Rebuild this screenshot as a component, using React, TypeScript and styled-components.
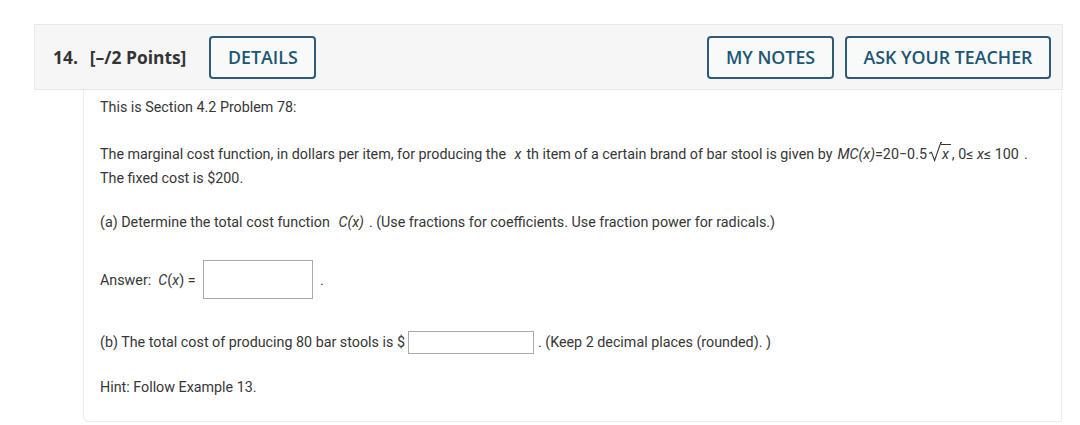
import React from 'react';
import styled, { createGlobalStyle } from 'styled-components';

const GlobalStyle = createGlobalStyle`
  html, body {
    margin: 0;
    padding: 0;
    background: #ffffff;
  }
  * {
    box-sizing: border-box;
  }
`;

const Page = styled.div`
  padding: 24px 0 0 34px;
  width: 1063px;
`;

const Header = styled.div`
  height: 66px;
  display: flex;
  align-items: center;
  padding: 0 11px 0 18px;
  background: #f6f6f6;
  border: 1px solid #e8e8e8;
`;

const Title = styled.div`
  font-family: 'Open Sans', 'Liberation Sans', sans-serif;
  font-weight: 700;
  font-size: 17.4px;
  color: #343434;
  white-space: pre;
  margin-right: 23px;
`;

const Gap = styled.span`
  display: inline-block;
  width: 12px;
`;

const Spacer = styled.div`
  flex: 1;
`;

const HeaderButton = styled.button<{ $width: number }>`
  width: ${({ $width }) => $width}px;
  height: 43px;
  border: 2px solid #2c5c76;
  border-radius: 4px;
  background: #f8f9f9;
  color: #1d5674;
  font-family: 'Open Sans', 'Liberation Sans', sans-serif;
  font-weight: 600;
  font-size: 17.8px;
  padding: 0;
  margin-left: 11px;
  cursor: pointer;

  &:first-of-type {
    margin-left: 0;
  }
`;

const Body = styled.div`
  margin-left: 49px;
  width: 979px;
  height: 332px;
  padding: 5px 16px 0;
  border-left: 1px solid #ececec;
  border-right: 1px solid #ececec;
  border-bottom: 1px solid #ececec;
  border-bottom-left-radius: 6px;
  font-family: Roboto, 'Liberation Sans', sans-serif;
  font-size: 14.3px;
  line-height: 24px;
  color: #363636;
`;

const Para = styled.p<{ $top: number }>`
  margin: ${({ $top }) => $top}px 0 0;
`;

const Math = styled.span`
  font-style: italic;
  padding: 0 5px;
`;

const Up = styled.span`
  font-style: normal;
`;

const Var = styled.i`
  font-style: italic;
`;

const Sqrt = styled.span`
  display: inline-flex;
  align-items: flex-end;
  vertical-align: -3px;
  margin: 0 1px;
`;

const Radicand = styled.span`
  font-style: italic;
  border-top: 1px solid #363636;
  line-height: 16px;
  padding: 1px 2px 0 1px;
  margin-left: -1px;
`;

const Row = styled.div<{ $top: number }>`
  display: flex;
  align-items: center;
  margin-top: ${({ $top }) => $top}px;
`;

const AnswerBox = styled.input<{ $w: number; $h: number; $gap: number }>`
  width: ${({ $w }) => $w}px;
  height: ${({ $h }) => $h}px;
  border: 1px solid #a9a9a9;
  background: #ffffff;
  margin: 0 4px 0 ${({ $gap }) => $gap}px;
  padding: 0 4px;
  font-family: Roboto, 'Liberation Sans', sans-serif;
  font-size: 14px;
`;

const RadicalSign: React.FC = () => (
  <svg width="14" height="20" viewBox="0 0 14 20" aria-hidden="true">
    <path d="M1 11.5 L3.5 10.2 L6.6 18.5 L12.8 0.6 L14 0.6" fill="none" stroke="#363636" strokeWidth="1.1" />
  </svg>
);

const App: React.FC = () => {
  return (
    <>
      <GlobalStyle />
      <Page>
        <Header>
          <Title>
            14.<Gap />[–/2 Points]
          </Title>
          <HeaderButton $width={107}>DETAILS</HeaderButton>
          <Spacer />
          <HeaderButton $width={127}>MY NOTES</HeaderButton>
          <HeaderButton $width={206}>ASK YOUR TEACHER</HeaderButton>
        </Header>
        <Body>
          <Para $top={0}>This is Section 4.2 Problem 78:</Para>
          <Para $top={23}>
            The marginal cost function, in dollars per item, for producing the <Math>x</Math>th item of a
            certain brand of bar stool is given by
            <Math>
              MC(x)<Up>=20−0.5</Up>
              <Sqrt>
                <RadicalSign />
                <Radicand>x</Radicand>
              </Sqrt>
              <Up>, 0≤ </Up>x<Up>≤ 100</Up>
            </Math>
            .
            <br />
            The fixed cost is $200.
          </Para>
          <Para $top={20}>
            (a) Determine the total cost function <Math>C(x)</Math>. (Use fractions for coefficients. Use fraction
            power for radicals.)
          </Para>
          <Row $top={26}>
            Answer:&nbsp;&nbsp;<Var>C</Var>(<Var>x</Var>)&nbsp;=
            <AnswerBox $w={110} $h={39} $gap={7} />
            &nbsp;.
          </Row>
          <Row $top={31}>
            (b) The total cost of producing 80 bar stools is $
            <AnswerBox $w={126} $h={23} $gap={3} />. (Keep 2 decimal places (rounded). )
          </Row>
          <Para $top={21}>Hint: Follow Example 13.</Para>
        </Body>
      </Page>
    </>
  );
};

export default App;
